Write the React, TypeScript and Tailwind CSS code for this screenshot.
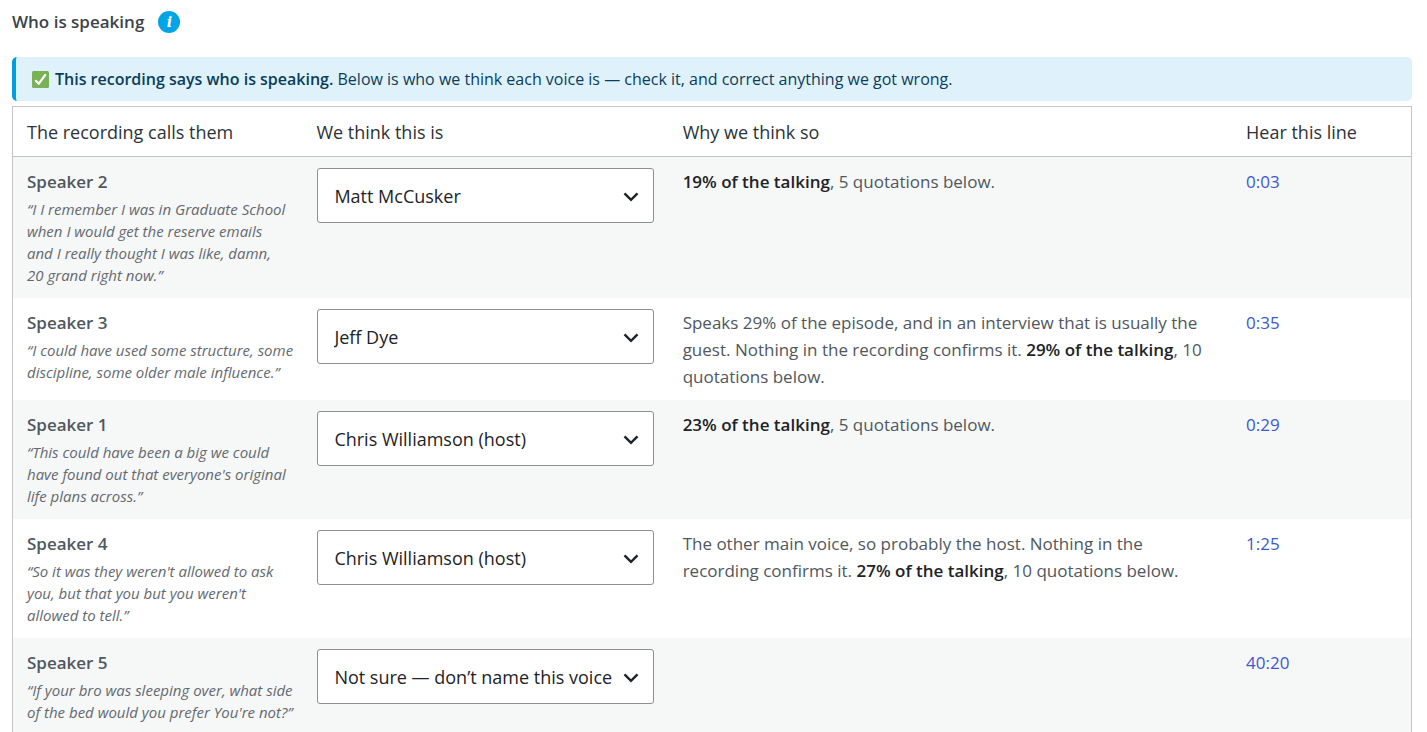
import { useState } from "react";
import type { ReactNode } from "react";

type Row = {
  name: string;
  quote: string;
  guess: string;
  reason: string;
  share: string;
  count: string;
  time: string;
};

const NOT_SURE = "Not sure — don’t name this voice";
const CHOICES = ["Matt McCusker", "Jeff Dye", "Chris Williamson (host)", NOT_SURE];

const ROWS: Row[] = [
  {
    name: "Speaker 2",
    quote:
      "I I remember I was in Graduate School when I would get the reserve emails and\u00a0I really thought I was like, damn, 20\u00a0grand right now.",
    guess: "Matt McCusker",
    reason: "",
    share: "19% of the talking",
    count: ", 5 quotations below.",
    time: "0:03",
  },
  {
    name: "Speaker 3",
    quote: "I could have used some structure, some discipline, some older male influence.",
    guess: "Jeff Dye",
    reason:
      "Speaks 29% of the episode, and in an interview that is usually the guest. Nothing in the recording confirms it. ",
    share: "29% of the talking",
    count: ", 10 quotations below.",
    time: "0:35",
  },
  {
    name: "Speaker 1",
    quote: "This could have been a big we could have found out that everyone's original life plans across.",
    guess: "Chris Williamson (host)",
    reason: "",
    share: "23% of the talking",
    count: ", 5 quotations below.",
    time: "0:29",
  },
  {
    name: "Speaker 4",
    quote: "So it was they weren't allowed to ask you, but that you but you weren't allowed to tell.",
    guess: "Chris Williamson (host)",
    reason: "The other main voice, so probably the host. Nothing in the recording confirms it. ",
    share: "27% of the talking",
    count: ", 10 quotations below.",
    time: "1:25",
  },
  {
    name: "Speaker 5",
    quote: "If your bro was sleeping over, what side of the bed would you prefer You're not?",
    guess: NOT_SURE,
    reason: "",
    share: "",
    count: "",
    time: "40:20",
  },
];

function CheckMark() {
  return (
    <svg viewBox="0 0 17 17" className="size-[17px] shrink-0" aria-hidden="true">
      <rect width="17" height="17" rx="1.5" fill="#77b255" />
      <path d="M3.8 9.8 L6.7 12.8 L13.2 4" fill="none" stroke="#fff" strokeWidth="2.2" strokeLinecap="round" strokeLinejoin="round" />
    </svg>
  );
}

function HeadCell({ children }: { children: ReactNode }) {
  return (
    <th scope="col" className="border-b border-[#c3c4c7] px-3.5 pt-3 pb-2.5 text-left text-lg leading-[27px] font-normal text-[#2c3338]">
      {children}
    </th>
  );
}

function VoiceSelect({ id, initial }: { id: string; initial: string }) {
  const [value, setValue] = useState(initial);
  return (
    <div className="relative mx-px">
      <select
        id={id}
        value={value}
        onChange={(e) => setValue(e.target.value)}
        className="block h-[55px] w-full appearance-none rounded-[3px] border border-[#8c8f94] bg-white pt-px pr-8 pl-4 text-lg text-[#1d2327]"
      >
        {CHOICES.map((c) => (
          <option key={c}>{c}</option>
        ))}
      </select>
      <svg viewBox="0 0 16 10" className="pointer-events-none absolute top-6 right-[15px] h-2.5 w-4" aria-hidden="true">
        <path d="M1.5 1.3 L8 7.8 L14.5 1.3" fill="none" stroke="#1d2327" strokeWidth="2.4" />
      </svg>
    </div>
  );
}

export default function App() {
  return (
    <main className="pr-[15px] pl-3 font-['Open_Sans','Noto_Sans',sans-serif] text-[17px] leading-[27px] text-[#50575e]">
      <div className="flex items-center gap-3.5 pt-2">
        <h2 className="text-[17px] font-semibold text-[#3c434a]">Who is speaking</h2>
        <button
          type="button"
          aria-label="About who is speaking"
          className="flex size-[22px] items-center justify-center rounded-full bg-[#00a5e6] font-['DejaVu_Serif',serif] text-sm leading-none font-bold text-white italic"
        >
          i
        </button>
      </div>

      <div className="mt-[22px] flex items-center gap-1.5 rounded-[5px] border-l-4 border-[#00a0df] bg-[#dff2fb] px-4 py-2 text-base leading-7 text-[#0a3d5c]">
        <CheckMark />
        <p>
          <strong className="font-semibold">This recording says who is speaking.</strong> Below is who we think each voice is — check it,
          and correct anything we got wrong.
        </p>
      </div>

      <table className="mt-[5px] w-full table-fixed border-separate border-spacing-0 border border-[#c3c4c7]">
        <colgroup>
          <col className="w-[20.7%]" />
          <col className="w-[26.2%]" />
          <col className="w-[40.3%]" />
          <col />
        </colgroup>
        <thead>
          <tr>
            <HeadCell>The recording calls them</HeadCell>
            <HeadCell>We think this is</HeadCell>
            <HeadCell>Why we think so</HeadCell>
            <HeadCell>Hear this line</HeadCell>
          </tr>
        </thead>
        <tbody>
          {ROWS.map((r, i) => {
            const id = `voice-${i}`;
            return (
              <tr key={r.name} className="align-top odd:bg-[#f6f7f7]">
                <td className="pt-[11px] pr-1.5 pb-3 pl-3.5">
                  <label htmlFor={id} className="block font-semibold">
                    {r.name}
                  </label>
                  <p className="mt-[3px] text-[15px] leading-[22px] text-[#646970] italic">{`“${r.quote}”`}</p>
                </td>
                <td className="px-3.5 py-[11px]">
                  <VoiceSelect id={id} initial={r.guess} />
                </td>
                <td className="px-3.5 pt-[11px] pb-2.5">
                  {r.reason}
                  <strong className="font-semibold text-[#1d2327]">{r.share}</strong>
                  {r.count}
                </td>
                <td className="px-3.5 py-[11px]">
                  <a href="#play" className="text-[#4058cf]">
                    {r.time}
                  </a>
                </td>
              </tr>
            );
          })}
        </tbody>
      </table>
    </main>
  );
}
